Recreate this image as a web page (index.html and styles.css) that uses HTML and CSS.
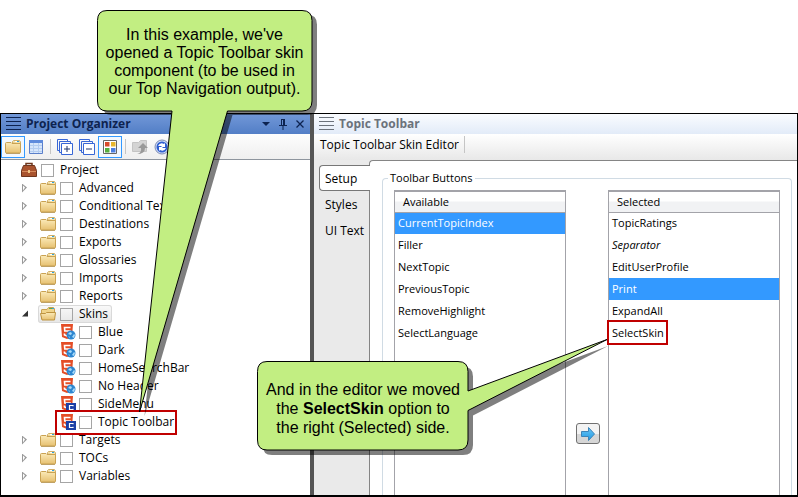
FILE: index.html
```html
<!DOCTYPE html>
<html lang="en">
<head>
<meta charset="utf-8">
<title>Project Organizer</title>
<link rel="stylesheet" href="styles.css">
</head>
<body>
<svg class="defs" width="0" height="0" aria-hidden="true">
  <defs>
    <linearGradient id="gold" x1="0" y1="0" x2="0" y2="1"><stop offset="0" stop-color="#fbeab8"/><stop offset="1" stop-color="#e6c070"/></linearGradient>
    <linearGradient id="azure" x1="0" y1="0" x2="0" y2="1"><stop offset="0" stop-color="#6cc5f5"/><stop offset="1" stop-color="#1f9be4"/></linearGradient>
    <symbol id="folder" viewBox="0 0 16 16">
      <path d="M7.500 4V2.500L8.500 1.500h6l1 1.500V5z" fill="#f6e2aa" stroke="#cfae68"/>
      <path d="M10 2.500h3" stroke="#fff"/><path d="M12 2.500h2" stroke="#2ea3e0"/>
      <path d="M.5 4.500q0-1 1-1h4.500l1 1h8.500v8.500q0 1-1 1h-13q-1 0-1-1z" fill="url(#gold)" stroke="#c9a252"/>
      <path d="M1 14.500h14" stroke="#a8823a" opacity=".6"/>
    </symbol>
    <symbol id="folder-open" viewBox="0 0 16 16">
      <path d="M1.500 13V4q0-.5.5-.5h5L8.500 1.500h5l1 1.500V8" fill="#f0d48b" stroke="#c9a252"/>
      <path d="M9 2.500h3" stroke="#5da948"/><path d="M12 2.500h2" stroke="#2ea3e0"/>
      <path d="M.5 7.500h5l1-1h9l-1 7.500h-12.500z" fill="url(#gold)" stroke="#bd9340"/>
    </symbol>
    <symbol id="skin" viewBox="0 0 16 16">
      <path d="M1 0h12l-1 13-5 2-5-2z" fill="#e44d26"/>
      <path d="M10.500 3.500h-6l.3 3.500h5.200l-.4 4-2.600 1-2.500-1-.1-1.500" fill="none" stroke="#fff" stroke-width="1.600"/>
    </symbol>
    <symbol id="skin-web" viewBox="0 0 16 16">
      <use href="#skin"/>
      <circle cx="11" cy="11" r="4.500" fill="#2d86d0"/>
      <path d="M8 10l2-2 2 1-1 2zM12 13l2-3 1 1-1 3zM8 12l2 1v1z" fill="#a9dcfa"/>
    </symbol>
    <symbol id="skin-comp" viewBox="0 0 16 16">
      <use href="#skin"/>
      <path d="M6 7h10v9H6z" fill="#1c3fa5"/>
      <path d="M13 10.200V9.500H9.500v4H13v-.7" fill="none" stroke="#fff" stroke-width="1.200"/>
    </symbol>
    <symbol id="bag" viewBox="0 0 16 16">
      <path d="M5 4V1.500h6V4" fill="none" stroke="#6d351b" stroke-width="1.500"/>
      <path d="M2.500 3.500h11l2 5v6H.5v-6z" fill="#a9532e" stroke="#6f351d"/>
      <path d="M1 9.500h14" stroke="#d68a5c"/><path d="M7 8h2v3H7z" fill="#f1c889"/>
    </symbol>
    <symbol id="grip" viewBox="0 0 15 14"><path d="M0 .5h15M0 4.500h15M0 8.500h15M0 12.500h15" stroke="currentColor"/></symbol>
    <symbol id="stack" viewBox="0 0 16 16">
      <path d="M2.500 11.500h-2v-11h10v2M4.500 13.500h-2v-11h11v2" fill="none" stroke="#3867d6"/>
      <path d="M4.500 4.500h11v11h-11z" fill="#fff" stroke="#3867d6"/>
    </symbol>
  </defs>
</svg>

<main class="stage">
  <div class="window">
    <section class="organizer">
      <header class="title title-active">
        <svg class="grip"><use href="#grip"/></svg>
        <h2>Project Organizer</h2>
        <div class="title-tools">
          <button aria-label="Window menu"><svg viewBox="0 0 10 12"><path d="M1 4h8L5 8z" fill="currentColor"/></svg></button>
          <button aria-label="Pin"><svg viewBox="0 0 10 12"><path d="M3.500 1v6M3 1.500h4M1 7.500h8M5 8v4" fill="none" stroke="currentColor"/><path d="M6 1v6" stroke="currentColor" stroke-width="2"/></svg></button>
          <button aria-label="Close"><svg viewBox="0 0 10 12"><path d="M1.500 2.500l7 7M8.500 2.500l-7 7" stroke="currentColor" stroke-width="1.300"/></svg></button>
        </div>
      </header>
      <div class="toolbar">
        <button class="tool on" aria-label="Show folders"><svg viewBox="0 0 16 16"><use href="#folder"/></svg></button>
        <button class="tool" aria-label="Details"><svg viewBox="0 0 16 16"><path d="M1.500 1.500h13v13h-13z" fill="#d7e6fb" stroke="#5a7fca"/><path d="M1 2.500h14" stroke="#5f8bdc" stroke-width="3"/><path d="M2 6.500h12M2 9.500h12M2 12.500h12M5.500 4v10M10.500 4v10" stroke="#b4cdf0"/></svg></button>
        <span class="rule"></span>
        <button class="tool" aria-label="Expand all"><svg viewBox="0 0 16 16"><use href="#stack"/><path d="M7 10h6M10 7v6" stroke="#20366f"/></svg></button>
        <button class="tool" aria-label="Collapse all"><svg viewBox="0 0 16 16"><use href="#stack"/><path d="M7 10h6" stroke="#20366f"/></svg></button>
        <button class="tool on" aria-label="Show tiles"><svg viewBox="0 0 16 16"><path d="M1.500 1.500h13v13h-13z" fill="#fff" stroke="#666"/><path d="M3 3h4.500v4.500H3z" fill="#d84a2b"/><path d="M9 3h4.500v4.500H9z" fill="#e8b62c"/><path d="M3 9h4.500v4.500H3z" fill="#55ad3f"/><path d="M9 9h4.500v4.500H9z" fill="#4b7ee0"/></svg></button>
        <span class="rule"></span>
        <button class="tool" aria-label="Move up"><svg viewBox="0 0 16 16"><path d="M.5 3.500h6l2-2h6v11H.5z" fill="#d4d4d4" stroke="#c4c4c4"/><path d="M5 15q5-1 4-6H6l5-5 5 5h-3q0 6-8 6z" fill="#999"/></svg></button>
        <button class="tool" aria-label="Refresh"><svg viewBox="0 0 16 16"><circle cx="8" cy="8" r="7" fill="#cfdcf8" stroke="#7f8db5"/><circle cx="8" cy="8" r="5.500" fill="#2f5ed0"/><path d="M4 7q2-4 6-2l1-1v4H7l1-1M12 9q-2 4-6 2l-1 1V8h4L8 9" fill="#fff"/></svg></button>
      </div>
      <ul class="tree">
        <li class="node"><svg class="ico"><use href="#bag"/></svg><input type="checkbox" id="n0"><label for="n0">Project</label></li>
        <li class="node"><span class="twist"></span><svg class="ico"><use href="#folder"/></svg><input type="checkbox" id="n1"><label for="n1">Advanced</label></li>
        <li class="node"><span class="twist"></span><svg class="ico"><use href="#folder"/></svg><input type="checkbox" id="n2"><label for="n2">Conditional Text</label></li>
        <li class="node"><span class="twist"></span><svg class="ico"><use href="#folder"/></svg><input type="checkbox" id="n3"><label for="n3">Destinations</label></li>
        <li class="node"><span class="twist"></span><svg class="ico"><use href="#folder"/></svg><input type="checkbox" id="n4"><label for="n4">Exports</label></li>
        <li class="node"><span class="twist"></span><svg class="ico"><use href="#folder"/></svg><input type="checkbox" id="n5"><label for="n5">Glossaries</label></li>
        <li class="node"><span class="twist"></span><svg class="ico"><use href="#folder"/></svg><input type="checkbox" id="n6"><label for="n6">Imports</label></li>
        <li class="node"><span class="twist"></span><svg class="ico"><use href="#folder"/></svg><input type="checkbox" id="n7"><label for="n7">Reports</label></li>
        <li class="node"><span class="twist open"></span><span class="picked"><svg class="ico"><use href="#folder-open"/></svg><input type="checkbox" id="n8"><label for="n8">Skins</label></span></li>
        <li class="node leaf"><svg class="ico"><use href="#skin-web"/></svg><input type="checkbox" id="n9"><label for="n9">Blue</label></li>
        <li class="node leaf"><svg class="ico"><use href="#skin-web"/></svg><input type="checkbox" id="n10"><label for="n10">Dark</label></li>
        <li class="node leaf"><svg class="ico"><use href="#skin-web"/></svg><input type="checkbox" id="n11"><label for="n11">HomeSearchBar</label></li>
        <li class="node leaf"><svg class="ico"><use href="#skin-web"/></svg><input type="checkbox" id="n12"><label for="n12">No Header</label></li>
        <li class="node leaf"><svg class="ico"><use href="#skin-comp"/></svg><input type="checkbox" id="n13"><label for="n13">SideMenu</label></li>
        <li class="node leaf marked"><svg class="ico"><use href="#skin-comp"/></svg><input type="checkbox" id="n14"><label for="n14">Topic Toolbar</label></li>
        <li class="node"><span class="twist"></span><svg class="ico"><use href="#folder"/></svg><input type="checkbox" id="n15"><label for="n15">Targets</label></li>
        <li class="node"><span class="twist"></span><svg class="ico"><use href="#folder"/></svg><input type="checkbox" id="n16"><label for="n16">TOCs</label></li>
        <li class="node"><span class="twist"></span><svg class="ico"><use href="#folder"/></svg><input type="checkbox" id="n17"><label for="n17">Variables</label></li>
      </ul>
    </section>

    <section class="editor">
      <header class="title">
        <svg class="grip"><use href="#grip"/></svg>
        <h2>Topic Toolbar</h2>
      </header>
      <div class="subtitle"><span>Topic Toolbar Skin Editor</span></div>
      <div class="body">
        <nav class="tabs">
          <button class="tab current">Setup</button>
          <button class="tab">Styles</button>
          <button class="tab">UI Text</button>
        </nav>
        <div class="pane">
          <fieldset>
            <legend>Toolbar Buttons</legend>
            <div class="lists">
              <div class="list">
                <table>
                  <thead><tr><th>Available</th></tr></thead>
                  <tbody>
                    <tr class="sel"><td>CurrentTopicIndex</td></tr>
                    <tr><td>Filler</td></tr>
                    <tr><td>NextTopic</td></tr>
                    <tr><td>PreviousTopic</td></tr>
                    <tr><td>RemoveHighlight</td></tr>
                    <tr><td>SelectLanguage</td></tr>
                  </tbody>
                </table>
              </div>
              <div class="mover">
                <button aria-label="Move to Selected"><svg viewBox="0 0 14 14"><path d="M.5 4.500h7v-4l6 6.500-6 6.500v-4h-7z" fill="url(#azure)" stroke="#3d84b8"/></svg></button>
              </div>
              <div class="list">
                <table>
                  <thead><tr><th>Selected</th></tr></thead>
                  <tbody>
                    <tr><td>TopicRatings</td></tr>
                    <tr><td><i>Separator</i></td></tr>
                    <tr><td>EditUserProfile</td></tr>
                    <tr class="sel"><td>Print</td></tr>
                    <tr><td>ExpandAll</td></tr>
                    <tr><td><span class="boxed">SelectSkin</span></td></tr>
                  </tbody>
                </table>
              </div>
            </div>
          </fieldset>
        </div>
      </div>
    </section>
  </div>

  <aside class="callout first">
    <svg class="bubble" viewBox="0 0 222 410">
      <path class="shade" transform="translate(5 4)" d="M10 .5H205q10 0 10 10V91q0 10-10 10H130.500L42.500 402 75 101H10Q.5 101 .5 91V10.500Q.5.500 10 .5z"/>
      <path class="shape" d="M10 .5H205q10 0 10 10V91q0 10-10 10H130.500L42.500 402 75 101H10Q.5 101 .5 91V10.500Q.5.500 10 .5z"/>
    </svg>
    <p>In this example, we've<br>opened a Topic Toolbar skin<br>component (to be used in<br>our Top Navigation output).</p>
  </aside>
  <aside class="callout second">
    <svg class="bubble" viewBox="0 0 352 118">
      <path class="shade" transform="translate(5 5)" d="M10 22.500H201q10 0 10 10V52L346 2 211 71.500V101q0 10-10 10H10Q.5 111 .5 101V32.500Q.5 22.500 10 22.500z"/>
      <path class="shape" d="M10 22.500H201q10 0 10 10V52L350 .5 211 71.500V101q0 10-10 10H10Q.5 111 .5 101V32.500Q.5 22.500 10 22.500z"/>
    </svg>
    <p>And in the editor we moved<br>the <b>SelectSkin</b> option to<br>the right (Selected) side.</p>
  </aside>
</main>
</body>
</html>
```

FILE: styles.css
```css
*, *::before, *::after { box-sizing: border-box; }

body {
  margin: 0;
  background: #fff;
  color: #000;
  font: 12px/18px "Open Sans", "Noto Sans", sans-serif;
}

button { font: inherit; color: inherit; padding: 0; border: 0; background: none; }

.defs { position: absolute; }

.stage {
  position: relative;
  display: flex;
  flex-direction: column;
  min-height: 100vh;
  padding-top: 113px;
}

.window {
  flex: 1;
  display: flex;
  border: 1px solid #000;
  border-bottom-width: 2px;
}

.organizer {
  flex: 0 0 313px;
  display: flex;
  flex-direction: column;
  border-right: 4px solid #555;
}

.title {
  display: flex;
  align-items: center;
  gap: 5px;
  height: 20px;
  padding: 0 5px;
  background: linear-gradient(#fafcff, #e2ebf8);
  color: #6b727b;
}

.title h2 { margin: 0; font-size: 12px; line-height: 20px; font-weight: 700; }
.title-active { background: linear-gradient(#7298d8, #527ec6); color: #0d2350; }
.grip { width: 15px; height: 14px; }
.title-tools { display: flex; gap: 7px; margin-left: auto; }
.title-tools button { width: 10px; height: 12px; }
.title-tools svg { display: block; width: 10px; height: 12px; }

.toolbar {
  display: flex;
  align-items: center;
  height: 26px;
  background: linear-gradient(#fdfdfd, #efefef);
  border-bottom: 1px solid #8e959e;
}

.tool { display: grid; place-items: center; width: 22px; height: 22px; border: 1px solid transparent; }
.tool.on { width: 24px; border-color: #3399ff; background: #f3f8fe; }
.tool svg { width: 16px; height: 16px; }
.rule { width: 1px; height: 15px; margin: 0 3px; background: #c5c5c5; }

.tree { list-style: none; margin: 0; padding: 1px 0 0; }
.node { display: flex; align-items: center; gap: 4px; height: 18px; padding-left: 20px; }
.node.leaf { padding-left: 59px; gap: 3px; }
.ico { width: 16px; height: 16px; flex: none; }
.node input {
  appearance: none;
  width: 13px;
  height: 13px;
  margin: 0;
  border: 1px solid #a5a5a5;
  background: #fff;
}
.node label { padding-left: 2px; white-space: nowrap; }
.leaf label { padding-left: 3px; }

.twist {
  width: 15px;
  height: 9px;
  background: #999;
  clip-path: polygon(1px 0, 6px 4px, 1px 9px, 1px 8px, 2px 7px, 4px 4px, 2px 2px, 2px 7px, 1px 8px);
}
.twist.open { background: #333; clip-path: polygon(7px 1px, 7px 7px, 1px 7px); }

.picked {
  display: flex;
  align-items: center;
  gap: 4px;
  height: 18px;
  margin-left: -2px;
  padding: 0 4px 0 2px;
  border-radius: 3px;
  background: linear-gradient(#fafafa, #e6e6e6);
  box-shadow: inset 0 0 0 1px #d9d9d9;
}
.picked input { background: transparent; }

.marked { position: relative; }
.marked::after {
  content: "";
  position: absolute;
  left: 54px;
  top: -3px;
  width: 122px;
  height: 25px;
  border: 2px solid #c00000;
}

.editor { flex: 1; display: flex; flex-direction: column; min-width: 0; }
.subtitle { height: 26px; padding: 2px 6px; background: linear-gradient(#fff, #e8e8e8); }
.subtitle span { padding-right: 5px; border-right: 1px solid #c5c5c5; }

.body { flex: 1; display: flex; background: #eaeaea; }
.tabs { display: flex; flex-direction: column; width: 55px; padding: 5px 0 0 5px; }
.tab { height: 26px; padding: 1px 0 0 6px; text-align: left; }
.tab.current {
  margin-right: -1px;
  background: #fff;
  border: 1px solid #777;
  border-right: 0;
  border-radius: 4px 0 0 4px;
  position: relative;
  padding-left: 5px;
}

.pane {
  flex: 1;
  display: flex;
  padding: 8px 5px 0 12px;
  background: #fff;
  border: 1px solid #858585;
  border-width: 1px 0 0 1px;
  border-top-left-radius: 4px;
}

fieldset {
  flex: 1;
  display: flex;
  min-width: 0;
  margin: 0;
  padding: 3px 11px 0;
  border: 1px solid #d0dbe4;
  border-bottom: 0;
  border-radius: 4px 4px 0 0;
  font-size: 11px;
}
legend { height: 18px; margin-left: -6px; padding: 0 2px; }

.lists { flex: 1; display: flex; }
.list { flex: 1; border: 1px solid #a3a3a9; border-top-width: 2px; border-bottom: 0; }
.list table { width: 100%; border-collapse: collapse; }
.list th {
  height: 20px;
  padding: 0 8px;
  border-bottom: 1px solid #a3a3a9;
  background: linear-gradient(#fff 45%, #f1f2f4 50%);
  font-weight: 400;
  text-align: left;
}
.list td { height: 22px; padding: 0 3px; }
.list .sel { background: #3399ff; color: #fff; }

.mover { width: 42px; padding: 233px 0 0 2px; text-align: center; }
.mover button {
  display: inline-grid;
  place-items: center;
  width: 24px;
  height: 21px;
  border: 1px solid #707070;
  border-radius: 3px;
  background: linear-gradient(#f3f3f3 50%, #d6d6d6 50%);
}
.mover svg { width: 14px; height: 14px; }

.boxed { position: relative; }
.boxed::after {
  content: "";
  position: absolute;
  inset: -5px -4px -5px -5px;
  border: 2px solid #c00000;
}

.callout { position: absolute; }
.callout.first { left: 97px; top: 10px; width: 222px; }
.callout.second { left: 257px; top: 339px; width: 352px; }
.bubble { position: absolute; left: 0; top: 0; width: 100%; }
.shade { fill: rgba(0, 0, 0, 0.5); }
.shape { fill: #c2ee82; stroke: #000; }
.callout p {
  position: relative;
  margin: 0;
  font: 16px/18px "Liberation Sans", Arial, sans-serif;
  text-align: center;
  white-space: nowrap;
}
.first p { padding: 16px 7px 0 0; }
.second p { width: 212px; padding-top: 41px; line-height: 19px; }
```
